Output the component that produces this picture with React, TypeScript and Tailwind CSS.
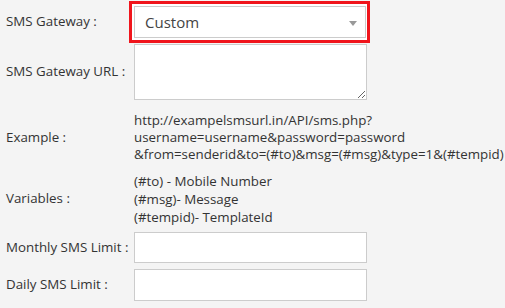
const labelCls = "text-[13.33px] text-[#333] pl-[6px] flex items-center";

export default function App() {
  return (
    <div className="w-[505px] h-[308px] bg-[#f4f4f4] overflow-hidden font-['Open_Sans',sans-serif] text-[#333]">
      <div className="grid grid-cols-[134px_1fr] pt-px">
        {/* gateway select */}
        <div className={labelCls}>SMS Gateway :</div>
        <div className="h-[42px] w-[241px] -ml-[5px] border-[3px] border-[#f0151c] bg-white p-[2px] pr-px">
          <div className="relative h-full border border-[#cccccc] bg-white">
            <select className="appearance-none w-full h-full bg-transparent pl-[10px] text-[15px] text-[#444] outline-none">
              <option>Custom</option>
            </select>
            <span className="pointer-events-none absolute right-[8px] top-[14px] w-0 h-0 border-l-[4px] border-r-[4px] border-t-[5px] border-l-transparent border-r-transparent border-t-[#999]" />
          </div>
        </div>

        {/* url */}
        <div className={labelCls}>SMS Gateway URL :</div>
        <textarea className="mt-px w-[233px] h-[56px] border border-[#cccccc] bg-white block" />

        {/* example */}
        <div className={labelCls + " mt-[12px]"}>Example :</div>
        <div className="mt-[12px] text-[13.33px] leading-[17px] whitespace-nowrap">
          <div>http://exampelsmsurl.in/API/sms.php?</div>
          <div>username=username&amp;password=password</div>
          <div>&amp;from=senderid&amp;to=(#to)&amp;msg=(#msg)&amp;type=1&amp;(#tempid)</div>
        </div>

        {/* variables */}
        <div className={labelCls + " mt-[9px]"}>Variables :</div>
        <div className="mt-[9px] text-[13.33px] leading-[18px]">
          <div>(#to) - Mobile Number</div>
          <div>(#msg)- Message</div>
          <div>(#tempid)- TemplateId</div>
        </div>

        {/* limits */}
        <div className={labelCls + " mt-[6px]"}>Monthly SMS Limit :</div>
        <input className="mt-[6px] w-[233px] h-[31px] border border-[#cccccc] bg-white block" />

        <div className={labelCls + " mt-[6px]"}>Daily SMS Limit :</div>
        <input className="mt-[6px] w-[233px] h-[32px] border border-[#cccccc] bg-white block" />
      </div>
    </div>
  );
}
